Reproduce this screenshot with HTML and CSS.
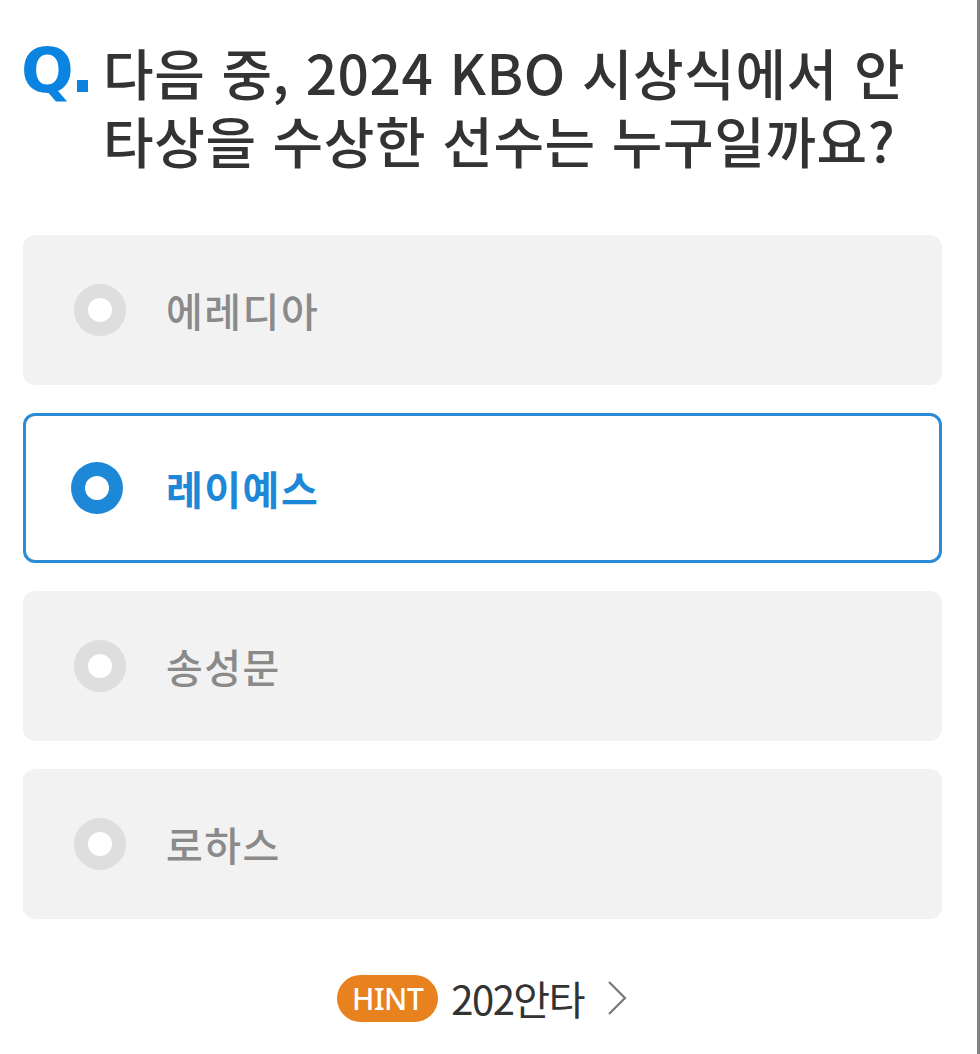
FILE: index.html
```html
<!DOCTYPE html>
<html lang="ko">
<head>
<meta charset="utf-8">
<link rel="stylesheet" href="styles.css">
</head>
<body>
<div class="screen">
  <div class="page">
    <div class="question">
      <div class="q-mark">Q<span class="q-dot"></span></div>
      <h1 class="q-text">다음 중, 2024 KBO 시상식에서 안타상을 수상한 선수는 누구일까요?</h1>
    </div>
    <ul class="options">
      <li class="option"><span class="radio"></span><span class="label">에레디아</span></li>
      <li class="option selected"><span class="radio"></span><span class="label">레이예스</span></li>
      <li class="option"><span class="radio"></span><span class="label">송성문</span></li>
      <li class="option"><span class="radio"></span><span class="label">로하스</span></li>
    </ul>
    <div class="hint">
      <span class="hint-badge">HINT</span>
      <span class="hint-text">202안타</span>
      <svg class="chev" width="22" height="36" viewBox="0 0 22 36"><path d="M3 2 L19 18 L3 34" fill="none" stroke="#777" stroke-width="2.2"/></svg>
    </div>
  </div>
  <div class="scrollbar"></div>
</div>
</body>
</html>
```
FILE: styles.css
```css
html, body { margin: 0; padding: 0; background: #fff; }
body { font-family: "Noto Sans CJK KR", "Noto Sans", sans-serif; }
.screen { display: flex; width: 980px; height: 1054px; overflow: hidden; }
.page { width: 919px; padding: 0 35px 0 23px; }
.scrollbar { width: 3px; background: #808080; }
.question { display: flex; align-items: flex-start; padding-top: 37px; }
.q-mark { width: 82px; flex: none; font-family: "DejaVu Sans", sans-serif; font-weight: 700; font-size: 62px; line-height: 68px; color: #0a84e0; display: flex; align-items: baseline; margin-left: -2px; }
.q-dot { display: inline-block; width: 11px; height: 12px; background: #0a84e0; margin-left: 3px; }
.q-text { margin: 0; font-size: 55px; line-height: 68px; font-weight: 500; color: #333; letter-spacing: 0.6px; width: 820px; }
.options { list-style: none; margin: 62px 0 0; padding: 0; display: flex; flex-direction: column; gap: 28px; }
.option { height: 150px; border-radius: 12px; background: #f2f2f2; display: flex; align-items: center; padding-left: 48px; box-sizing: border-box; border: 3px solid transparent; }
.option.selected { background: #fff; border-color: #2a8bd6; padding-left: 45px; }
.radio { width: 52px; height: 52px; border-radius: 50%; background: #dedede; flex: none; display: flex; align-items: center; justify-content: center; }
.radio::after { content: ""; width: 24px; height: 24px; border-radius: 50%; background: #fff; }
.selected .radio { background: #1e88d8; }
.label { margin-left: 40px; font-size: 40px; font-weight: 500; color: #8a8a8a; letter-spacing: 1.5px; }
.selected .label { color: #1e88d8; font-weight: 700; margin-left: 43px; }
.hint { display: flex; align-items: center; justify-content: center; margin-top: 50px; padding-left: 0; }
.hint-badge { background: #e8821e; color: #fff; font-family: "Noto Sans", sans-serif; font-size: 30px; font-weight: 500; height: 47px; line-height: 47px; padding: 0 15px; border-radius: 24px; letter-spacing: -0.5px; }
.hint-text { margin-left: 13px; font-size: 40px; color: #333; font-weight: 400; letter-spacing: -1.5px; }
.chev { margin-left: 22px; }
```
